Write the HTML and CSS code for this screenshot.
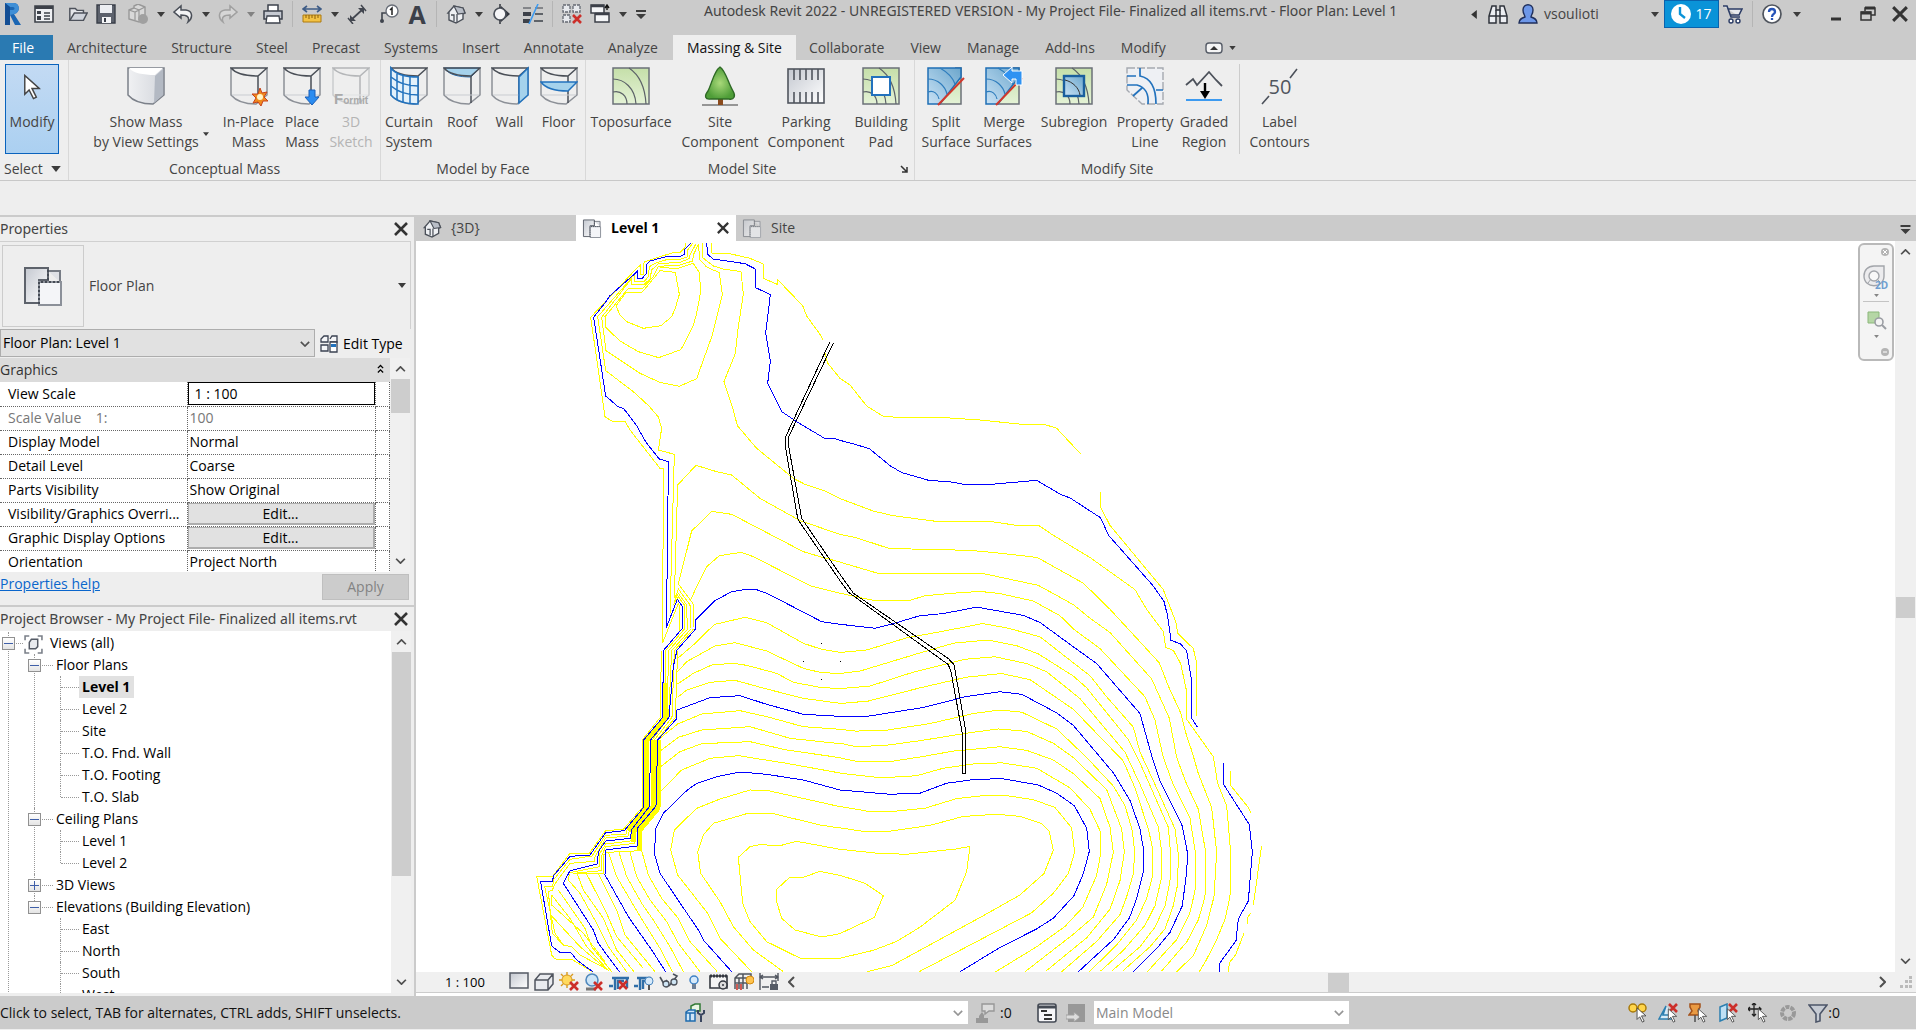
FILE: index.html
```html
<!DOCTYPE html>
<html lang="en">
<head>
  <meta charset="UTF-8" />
  <meta name="viewport" content="width=device-width, initial-scale=1.0" />
  <title>Autodesk Revit 2022</title>
  <link rel="stylesheet" href="styles.css">
</head>
<body>
<svg class="defs" aria-hidden="true">
  <defs>
    <linearGradient id="grey" x1="0" y1="0" x2="1" y2="1"><stop offset="0" stop-color="#c4c8d0"/><stop offset="1" stop-color="#fff"/></linearGradient>
    <linearGradient id="green" x1="0" y1="0" x2="0" y2="1"><stop offset="0" stop-color="#c5dfa9"/><stop offset="1" stop-color="#e4f2d6"/></linearGradient>
    <linearGradient id="sea" x1="1" y1="0" x2="0" y2="1"><stop offset="0" stop-color="#6ba6cc"/><stop offset="1" stop-color="#c9e2f5"/></linearGradient>
    <linearGradient id="solid" x1="0" y1="0" x2="1" y2="0"><stop offset="0" stop-color="#f0f1f3"/><stop offset="1" stop-color="#d3d6dc"/></linearGradient>
    <radialGradient id="leaf"><stop offset="0" stop-color="#a9d97a"/><stop offset="1" stop-color="#4f9e38"/></radialGradient>
    <symbol id="mass" viewBox="0 0 38 40">
      <path d="M1 2V29C6 35 14 38 26 38L37 29V2" fill="none" stroke="#8c9097" stroke-width="1.5"/>
      <path d="M1 2H37L28 10C16 10 6 8 1 2ZM28 10V37" fill="none" stroke="#4a4f57" stroke-width="1.5"/>
      <path d="M2 29H27L36 29" stroke="#c9ccd1" fill="none"/>
    </symbol>
    <symbol id="topo" viewBox="0 0 38 40">
      <rect x="1" y="2" width="36" height="36" fill="url(#green)" stroke="#6b7078" stroke-width="1.5"/>
      <path d="M17 2C26 8 33 20 34 38M1 13C12 13 23 22 24 38M1 26C9 24 15 30 15 38" fill="none" stroke="#5c6268" stroke-width="1.2"/>
    </symbol>
    <symbol id="topo-blue" viewBox="0 0 38 40">
      <path d="M28 2H34V38H12" fill="url(#green)" stroke="#6b7078" stroke-width="1.5"/>
      <path d="M1 2H34V11L13 38H1Z" fill="url(#sea)" stroke="#1f6fb5" stroke-width="1.5"/>
      <path d="M13 2C20 6 26 12 28 18M1 13C11 13 18 20 20 28M1 26C7 24 11 28 12 33" fill="none" stroke="#2f7dbd" stroke-width="1.2"/>
      <path d="M11 39L37 12" stroke="#d2382c" stroke-width="2"/>
    </symbol>
    <symbol id="plan" viewBox="0 0 40 40">
      <path d="M2 2H25V14H16V37H2Z" fill="url(#grey)" stroke="#5d626b" stroke-width="2"/>
      <path d="M25 5H37V16" fill="#dfe1e6" stroke="#777c85" stroke-width="2"/>
      <path d="M16 16H38V39H16Z" fill="#f4f5f8" stroke="#8b9099" stroke-width="2"/>
      <path d="M16 38V16H38M25 14V3" fill="none" stroke="#444a54" stroke-width="2" stroke-dasharray="2 2"/>
    </symbol>
    <symbol id="x" viewBox="0 0 14 14"><path d="M1 1L13 13M13 1L1 13" stroke="#333" stroke-width="2.6"/></symbol>
    <symbol id="redx" viewBox="0 0 10 10"><path d="M1 1L9 9M9 1L1 9" stroke="#cc2f2a" stroke-width="2.6"/></symbol>
    <symbol id="down" viewBox="0 0 8 5"><path d="M0 0H8L4 5Z" fill="#3c3c3c"/></symbol>
    <symbol id="chev" viewBox="0 0 12 8"><path d="M1 6L6 1L11 6" fill="none" stroke="#505050" stroke-width="2"/></symbol>
    <symbol id="arrow" viewBox="0 0 12 18"><path d="M1 1V14L4 11L7 17L9 16L6 10L11 10Z" fill="#fff" stroke="#444" stroke-width="1"/></symbol>
    <symbol id="cube" viewBox="0 0 20 20">
      <path d="M2 8L8 2L18 5V14L10 19L2 16Z" fill="#f1f2f4" stroke="#555b64" stroke-width="1.4"/>
      <path d="M2 8L10 10L18 5M10 10V19" fill="none" stroke="#555b64" stroke-width="1.2"/>
    </symbol>
    <symbol id="house" viewBox="0 0 20 20">
      <path d="M2 9L8 2L17 4L19 9L17 10V15L10 19L3 16V9Z" fill="#eef0f3" stroke="#4c515a" stroke-width="1.4"/>
      <path d="M8 2L12 10L19 9L17 4Z" fill="#b9bec7" stroke="#4c515a" stroke-width="1.2"/>
      <path d="M11 10V19M5 11H8V17" fill="none" stroke="#4c515a" stroke-width="1.3"/>
    </symbol>
  </defs>
</svg>

<header class="titlebar">
  <div class="quick">
    <button class="ico" aria-label="Revit"><svg viewBox="0 0 20 26"><path d="M3 2H12C18 2 19 12 12 13L19 24H13L8 14V24H3Z" fill="#1b66b3"/><path d="M3 2H12C18 2 19 12 12 13L8 14V9H11C13 9 13 6 11 6H8L3 2Z" fill="#3f8fd6"/><path d="M3 2L8 6V24H3Z" fill="#134e94"/></svg></button>
    <button class="ico gap" aria-label="Home"><svg viewBox="0 0 20 20"><path d="M1 2H19V18H1Z" fill="#eef0f3" stroke="#3d4149" stroke-width="1.6"/><path d="M1 2H19V5H1ZM3 7H7V10H3ZM3 12H7V16H3Z" fill="#3d4149"/><path d="M10 9H16M10 12H16M10 15H16" stroke="#3d4149" stroke-width="1.4"/></svg></button>
    <button class="ico gap open" aria-label="Open"><svg viewBox="0 0 22 20"><path d="M2 17V4H8L10 6H17V9" fill="#e4e6ea" stroke="#4d525b" stroke-width="1.6"/><path d="M2 17L7 9H21L17 17Z" fill="#cfd3da" stroke="#4d525b" stroke-width="1.6"/></svg></button>
    <button class="ico" aria-label="Save"><svg viewBox="0 0 20 20"><path d="M1 1H19V19H1Z" fill="#5d626d" stroke="#3a3f49" stroke-width="1.4"/><path d="M4 1H16V9H4Z" fill="#eceef2"/><path d="M6 13H15V19H6Z" fill="#f4f5f7"/><path d="M8 14H10V18H8Z" fill="#3a3f49"/></svg></button>
    <button class="ico gap dim" aria-label="Synchronize"><svg viewBox="0 0 20 20"><path d="M1 6L6 4V2L10 0L17 3V12L11 18L1 15Z" fill="#e6e6e6" stroke="#666" stroke-width="1.4"/><path d="M1 6L7 8L17 3M7 8V16M6 4L11 6V16" fill="none" stroke="#666" stroke-width="1.2"/><circle cx="15" cy="15" r="5" fill="#777"/></svg></button>
    <button class="dd" aria-label="More"><svg><use href="#down"/></svg></button>
    <button class="ico" aria-label="Undo"><svg viewBox="0 0 20 20"><path d="M1 8L8 2V6H13C20 7 20 14 15 18C17 13 14 11 8 11V14Z" fill="#f2f3f5" stroke="#4a4f58" stroke-width="1.5"/></svg></button>
    <button class="dd" aria-label="Undo list"><svg><use href="#down"/></svg></button>
    <button class="ico dim" aria-label="Redo"><svg viewBox="0 0 20 20"><path d="M19 8L12 2V6H7C0 7 0 14 5 18C3 13 6 11 12 11V14Z" fill="#e2e2e2" stroke="#777" stroke-width="1.5"/></svg></button>
    <button class="dd dim" aria-label="Redo list"><svg><use href="#down"/></svg></button>
    <button class="ico" aria-label="Print"><svg viewBox="0 0 20 20"><path d="M5 8V1H15V8" fill="#fff" stroke="#3d424c" stroke-width="1.5"/><path d="M1 7H19V15H1Z" fill="#c5c9d1" stroke="#3d424c" stroke-width="1.5"/><path d="M4 12H16L17 19H3Z" fill="#fff" stroke="#3d424c" stroke-width="1.3"/></svg></button>
    <span class="vr"></span>
    <button class="ico" aria-label="Measure"><svg viewBox="0 0 20 20"><path d="M1 5H19M5 2L1 5L5 8M15 2L19 5L15 8" fill="none" stroke="#3e5c86" stroke-width="1.6"/><path d="M1 11H19V18H1Z" fill="#f3c244" stroke="#ad7a10"/><path d="M4 11V14M7 11V15M10 11V14M13 11V15M16 11V14" stroke="#8a5e08"/></svg></button>
    <button class="dd" aria-label="Measure list"><svg><use href="#down"/></svg></button>
    <button class="ico" aria-label="Aligned dimension"><svg viewBox="0 0 20 20"><path d="M4 16L16 5" stroke="#42464f" stroke-width="1.7"/><path d="M3 17V11L9 17ZM17 4V10L11 4Z" fill="#42464f"/><path d="M1 14L6 20M14 1L19 7" stroke="#42464f" stroke-width="1.5"/></svg></button>
    <button class="ico gap" aria-label="Tag"><svg viewBox="0 0 20 20"><path d="M3 18V9H7" fill="none" stroke="#3f444d" stroke-width="1.6"/><circle cx="3" cy="17" r="2" fill="#3f444d"/><circle cx="13" cy="7" r="6" fill="#fff" stroke="#6a6f79" stroke-width="1.4"/><path d="M11 6L13 4V11" fill="none" stroke="#222" stroke-width="1.5"/></svg></button>
    <button class="ico text" aria-label="Text">A</button>
    <span class="vr"></span>
    <button class="ico" aria-label="3D view"><svg><use href="#house"/></svg></button>
    <button class="dd" aria-label="3D list"><svg><use href="#down"/></svg></button>
    <button class="ico" aria-label="Section"><svg viewBox="0 0 20 20"><path d="M10 2L19 10L10 18Z" fill="#32363e"/><circle cx="9" cy="10" r="6" fill="#f5f5f7" stroke="#4c515a" stroke-width="1.7"/><path d="M9 0V4M9 16V20" stroke="#32363e" stroke-width="1.5"/></svg></button>
    <button class="ico gap" aria-label="Thin lines"><svg viewBox="0 0 20 20"><path d="M0 4H8M12 4H20" stroke="#3d4149"/><path d="M0 10H8M0 17H7" stroke="#3d4149" stroke-width="4"/><path d="M12 10H20M11 17H20" stroke="#3d4149" stroke-width="1.4"/><path d="M15 0L6 20" stroke="#3c9af0" stroke-width="1.6"/></svg></button>
    <span class="vr"></span>
    <button class="ico" aria-label="Close inactive"><svg viewBox="0 0 20 20"><path d="M1 1H8V8H1ZM11 1H18V8H11ZM1 11H8V18H1Z" fill="#e7e9ed" stroke="#656a73" stroke-width="1.3" stroke-dasharray="3 1"/><use href="#redx" x="10" y="10" width="10" height="10"/></svg></button>
    <button class="ico" aria-label="Switch windows"><svg viewBox="0 0 20 20"><path d="M1 1H14V9H1ZM5 9H19V18H5Z" fill="#f4f5f7" stroke="#3c4049" stroke-width="1.5"/><path d="M1 2H14M5 10H19" stroke="#3c4049" stroke-width="2.4"/><path d="M17 6V2M15 4L17 1L19 4" fill="none" stroke="#111" stroke-width="1.4"/></svg></button>
    <button class="dd" aria-label="Windows list"><svg><use href="#down"/></svg></button>
    <button class="dd" aria-label="Customize"><svg viewBox="0 0 10 9"><path d="M0 0H10V2H0ZM0 4H10L5 9Z" fill="#3c3c3c"/></svg></button>
  </div>
  <h1>Autodesk Revit 2022 - UNREGISTERED VERSION - My Project File- Finalized all items.rvt - Floor Plan: Level 1</h1>
  <div class="account">
    <button class="dd" aria-label="Collapse search"><svg viewBox="0 0 5 8"><path d="M5 0V8L0 4Z" fill="#333"/></svg></button>
    <button class="ico" aria-label="Search"><svg viewBox="0 0 20 20"><path d="M4 2H8V6H12V2H16L19 12V19H12V12H8V19H1V12Z" fill="#eceef2" stroke="#2f333b" stroke-width="1.5"/><path d="M1 12H8M12 12H19M8 6V12M12 6V12" stroke="#2f333b" stroke-width="1.5"/></svg></button>
    <button class="user"><svg viewBox="0 0 20 20"><path d="M5 6C5 -1 15 -1 15 6C15 10 13 11 13 13C16 14 19 15 19 19H1C1 15 4 14 7 13C7 11 5 10 5 6Z" fill="#6d97e8" stroke="#1f2f5c" stroke-width="1.4"/></svg>vsoulioti</button>
    <button class="dd" aria-label="Account list"><svg><use href="#down"/></svg></button>
    <button class="trial"><svg viewBox="0 0 20 20"><circle cx="10" cy="10" r="10" fill="#fff"/><path d="M9 3V10L14 14" fill="none" stroke="#0a93d8" stroke-width="2.4"/></svg>17</button>
    <button class="ico" aria-label="Store"><svg viewBox="0 0 20 20"><path d="M0 2H4L8 13H17M5 5H19L16 11H7" fill="#e8eaef" stroke="#2c3d66" stroke-width="1.6"/><circle cx="8" cy="17" r="2" fill="#fff" stroke="#2c3d66" stroke-width="1.4"/><circle cx="15" cy="17" r="2" fill="#fff" stroke="#2c3d66" stroke-width="1.4"/></svg></button>
    <span class="vr"></span>
    <button class="ico" aria-label="Help"><svg viewBox="0 0 20 20"><circle cx="10" cy="10" r="9" fill="#fff" stroke="#50555e" stroke-width="1.7"/><path d="M7 8C7 4 13 4 13 8C13 10 10 10 10 13M10 14V16" fill="none" stroke="#2553b8" stroke-width="2.3"/></svg></button>
    <button class="dd" aria-label="Help list"><svg><use href="#down"/></svg></button>
  </div>
  <div class="window">
    <button aria-label="Minimize"><svg viewBox="0 0 16 16"><path d="M3 13H13" stroke="#333" stroke-width="3"/></svg></button>
    <button aria-label="Restore"><svg viewBox="0 0 16 16"><path d="M5 5V2H15V9H11M1 6H11V14H1Z" fill="none" stroke="#333" stroke-width="1.5"/><path d="M5 2H15M1 7H11" stroke="#333" stroke-width="3"/></svg></button>
    <button aria-label="Close"><svg><use href="#x"/></svg></button>
  </div>
</header>

<nav class="tabs">
  <a class="file" href="#">File</a>
  <a href="#">Architecture</a>
  <a href="#">Structure</a>
  <a href="#">Steel</a>
  <a href="#">Precast</a>
  <a href="#">Systems</a>
  <a href="#">Insert</a>
  <a href="#">Annotate</a>
  <a href="#">Analyze</a>
  <a class="active" href="#">Massing &amp; Site</a>
  <a href="#">Collaborate</a>
  <a href="#">View</a>
  <a href="#">Manage</a>
  <a href="#">Add-Ins</a>
  <a href="#">Modify</a>
  <button class="minimize" aria-label="Minimize ribbon"><svg viewBox="0 0 18 12"><rect x="1" y="1" width="16" height="10" rx="3" fill="#f4f4f4" stroke="#555b66" stroke-width="1.4"/><path d="M5 8L9 4L13 8Z" fill="#333"/></svg><svg class="tri"><use href="#down"/></svg></button>
</nav>

<div class="ribbon">
  <section class="panel select">
    <div class="tools"><button class="modify"><svg viewBox="0 0 12 18"><use href="#arrow"/></svg>Modify</button></div>
    <h2>Select <svg><use href="#down"/></svg></h2>
  </section>
  <section class="panel mass">
    <div class="tools">
      <button><svg viewBox="0 0 38 40"><path d="M1 2H37V29L26 38C14 38 6 35 1 29Z" fill="url(#solid)" stroke="#7b8089" stroke-width="1.5"/><path d="M2 2H36L28 9C16 9 6 7 2 2Z" fill="#fff"/><path d="M28 10L36 3V29L27 37Z" fill="#b3b9c3"/></svg><span>Show Mass<br>by View Settings</span><svg class="tri"><use href="#down"/></svg></button>
      <button><svg viewBox="0 0 38 40"><use href="#mass"/><path d="M30 22L32 27L37 26L34 31L38 35L33 35L31 40L28 36L23 37L26 32L22 28L28 28Z" fill="#f08a1d" stroke="#c9421a"/><circle cx="30" cy="31" r="3" fill="#fff6c9"/></svg><span>In-Place<br>Mass</span></button>
      <button><svg viewBox="0 0 38 40"><use href="#mass"/><path d="M26 24H32V31H36L29 39L22 31H26Z" fill="#2b8cf0" stroke="#1b5fb8"/></svg><span>Place<br>Mass</span></button>
      <button disabled><svg viewBox="0 0 38 40"><use href="#mass" opacity=".35"/><text x="2" y="38" class="formit"><tspan class="big">F</tspan>ormit</text></svg><span>3D<br>Sketch</span></button>
    </div>
    <h2>Conceptual Mass</h2>
  </section>
  <section class="panel face">
    <div class="tools">
      <button><svg viewBox="0 0 38 40"><use href="#mass"/><path d="M1 2C6 9 16 11 28 11V38C16 38 6 35 1 29Z" fill="#e3f1fb" stroke="#2272bd" stroke-width="1.6"/><path d="M7 8V34M13 10V37M20 11V38M1 11C8 17 18 20 28 20M1 20C8 26 18 29 28 29" fill="none" stroke="#2272bd" stroke-width="1.5"/></svg><span>Curtain<br>System</span></button>
      <button><svg viewBox="0 0 38 40"><path d="M1 2H37L28 11C16 11 6 9 1 2Z" fill="#a5d2ec" stroke="#2272bd"/><use href="#mass"/></svg><span>Roof</span></button>
      <button><svg viewBox="0 0 38 40"><use href="#mass"/><path d="M28 11L37 2V29L28 37Z" fill="#a5d2ec" stroke="#2272bd" stroke-width="1.5"/></svg><span>Wall</span></button>
      <button><svg viewBox="0 0 38 40"><use href="#mass"/><path d="M1 16H37L28 25C16 25 6 23 1 16Z" fill="#a5d2ec" stroke="#2272bd" stroke-width="1.5"/></svg><span>Floor</span></button>
    </div>
    <h2>Model by Face</h2>
  </section>
  <section class="panel site">
    <div class="tools">
      <button><svg><use href="#topo"/></svg><span>Toposurface</span></button>
      <button><svg viewBox="0 0 38 40"><path d="M1 39H37" stroke="#777" stroke-width="1.6"/><path d="M17 32H22V39H17Z" fill="#8a4a1c"/><path d="M19 1C25 5 27 17 32 25C35 30 33 34 28 33H10C4 34 3 30 7 25C11 17 13 5 19 1Z" fill="url(#leaf)" stroke="#2f6a26" stroke-width="1.4"/></svg><span>Site<br>Component</span></button>
      <button><svg viewBox="0 0 38 40"><rect x="1" y="3" width="36" height="34" fill="url(#grey)" stroke="#50555e" stroke-width="1.6"/><path d="M7 3V14M13 3V14M19 3V14M25 3V14M31 3V14M7 26V37M13 26V37M19 26V37M25 26V37M31 26V37" stroke="#50555e" stroke-width="1.6"/></svg><span>Parking<br>Component</span></button>
      <button><svg viewBox="0 0 38 40"><use href="#topo"/><rect x="10" y="11" width="18" height="18" fill="#fff" stroke="#2272bd" stroke-width="2"/></svg><span>Building<br>Pad</span></button>
    </div>
    <h2>Model Site<svg class="launch" viewBox="0 0 8 8"><path d="M1 1L7 7M7 2V7H2" fill="none" stroke="#333" stroke-width="1.5"/></svg></h2>
  </section>
  <section class="panel edit">
    <div class="tools">
      <button><svg><use href="#topo-blue"/></svg><span>Split<br>Surface</span></button>
      <button><svg viewBox="0 0 38 40"><use href="#topo-blue"/><path d="M18 9L27 1V5H37V19H31V13H27V17Z" fill="#2f92f2" stroke="#fff"/></svg><span>Merge<br>Surfaces</span></button>
      <button><svg viewBox="0 0 38 40"><use href="#topo"/><rect x="9" y="10" width="20" height="20" fill="url(#sea)" stroke="#1a5f9e" stroke-width="2.4"/><path d="M10 14C18 16 24 22 25 29" fill="none" stroke="#333"/></svg><span>Subregion</span></button>
      <button><svg viewBox="0 0 38 40"><path d="M1 2H37V38H16L1 24Z" fill="#eef0f4" stroke="#a5a9b0" stroke-width="1.4" stroke-dasharray="8 2"/><path d="M14 2V10C24 12 30 20 30 38M30 24H37M1 10H10M1 19H11C19 21 23 28 22 38M16 22L7 30" fill="none" stroke="#2272bd" stroke-width="1.7"/></svg><span>Property<br>Line</span></button>
      <button><svg viewBox="0 0 38 40"><path d="M1 19L8 13L12 19L24 6L31 14L37 20" fill="none" stroke="#4c515a" stroke-width="1.8"/><path d="M20 17V28" stroke="#000" stroke-width="2.4"/><path d="M15 25H25L20 33Z"/><path d="M1 34H37" stroke="#3c9af0" stroke-width="2"/></svg><span>Graded<br>Region</span></button>
      <button class="apart"><svg viewBox="0 0 38 40"><path d="M1 38L8 30M29 12L36 3" stroke="#4c515a" stroke-width="1.6"/><text x="19" y="28" class="fifty">50</text></svg><span>Label<br>Contours</span></button>
    </div>
    <h2>Modify Site</h2>
  </section>
</div>
<div class="options"></div>

<main>
  <aside>
    <section class="props">
      <header class="bar"><h3>Properties</h3><button aria-label="Close properties"><svg><use href="#x"/></svg></button></header>
      <button class="type">
        <span class="thumb"><svg><use href="#plan"/></svg></span>
        <span>Floor Plan</span>
        <svg class="tri"><use href="#down"/></svg>
      </button>
      <div class="instance">
        <div class="combo"><select aria-label="Instance"><option>Floor Plan: Level 1</option></select><svg><use href="#chev"/></svg></div>
        <button class="edit-type"><svg viewBox="0 0 18 18"><path d="M1 4L4 1H8V7H1ZM10 4L12 1H17V7H10M1 10H8V16H1Z" fill="#f5f6f8" stroke="#3a4151" stroke-width="1.3"/><path d="M10 7H17V17H10Z" fill="#fff" stroke="#3a4151" stroke-width="1.3"/><path d="M11 9H16V12H11Z" fill="#2272bd"/></svg>Edit Type</button>
      </div>
      <div class="grid">
        <table>
          <colgroup><col class="name"><col class="value"><col></colgroup>
          <tbody>
          <tr><th class="group" colspan="3">Graphics<svg viewBox="0 0 8 10"><path d="M1 4L4 1L7 4M1 9L4 6L7 9" fill="none" stroke="#000" stroke-width="1.5"/></svg></th></tr>
          <tr><th><label for="scale">View Scale</label></th><td class="edit"><input id="scale" value="1 : 100"></td><td></td></tr>
          <tr class="off"><th>Scale Value &nbsp; &nbsp;1:</th><td>100</td><td></td></tr>
          <tr><th>Display Model</th><td>Normal</td><td></td></tr>
          <tr><th>Detail Level</th><td>Coarse</td><td></td></tr>
          <tr><th>Parts Visibility</th><td>Show Original</td><td></td></tr>
          <tr><th>Visibility/Graphics Overri...</th><td class="edit"><button>Edit...</button></td><td></td></tr>
          <tr><th>Graphic Display Options</th><td class="edit"><button>Edit...</button></td><td></td></tr>
          <tr><th>Orientation</th><td>Project North</td><td></td></tr>
          </tbody>
        </table>
        <div class="scroll"><svg><use href="#chev"/></svg><i></i><svg class="flip"><use href="#chev"/></svg></div>
      </div>
      <footer><a href="#">Properties help</a><button disabled>Apply</button></footer>
    </section>

    <section class="browser">
      <header class="bar"><h3>Project Browser - My Project File- Finalized all items.rvt</h3><button aria-label="Close browser"><svg><use href="#x"/></svg></button></header>
      <div class="treebox">
        <ul class="tree">
          <li><button class="minus" aria-label="Collapse"></button><svg class="views" viewBox="0 0 18 18"><path d="M1 5V1H5M13 1H17V5M17 13V17H13M5 17H1V13" fill="none" stroke="#7b8089" stroke-width="1.5"/><path d="M5 7L7 4H13V11L11 13H5Z" fill="#e8eaee" stroke="#555b66" stroke-width="1.4"/></svg>Views (all)
            <ul>
              <li><button class="minus" aria-label="Collapse"></button>Floor Plans
                <ul>
                  <li><b>Level 1</b></li>
                  <li>Level 2</li>
                  <li>Site</li>
                  <li>T.O. Fnd. Wall</li>
                  <li>T.O. Footing</li>
                  <li>T.O. Slab</li>
                </ul>
              </li>
              <li><button class="minus" aria-label="Collapse"></button>Ceiling Plans
                <ul>
                  <li>Level 1</li>
                  <li>Level 2</li>
                </ul>
              </li>
              <li><button class="minus plus" aria-label="Expand"></button>3D Views</li>
              <li><button class="minus" aria-label="Collapse"></button>Elevations (Building Elevation)
                <ul>
                  <li>East</li>
                  <li>North</li>
                  <li>South</li>
                  <li>West</li>
                </ul>
              </li>
            </ul>
          </li>
        </ul>
        <div class="scroll tall"><svg><use href="#chev"/></svg><i></i><svg class="flip"><use href="#chev"/></svg></div>
      </div>
    </section>
  </aside>

  <section class="work">
    <nav class="views-tabs">
      <a href="#"><svg><use href="#house"/></svg>{3D}</a>
      <a class="active" href="#"><svg><use href="#plan"/></svg>Level 1<svg class="close"><use href="#x"/></svg></a>
      <a href="#"><svg class="faded"><use href="#plan"/></svg>Site</a>
      <button aria-label="Tab list"><svg viewBox="0 0 10 9"><path d="M0 0H10V2H0ZM0 4H10L5 9Z" fill="#3c3c3c"/></svg></button>
    </nav>
    <div class="canvas">
      <svg class="drawing">
        <g transform="translate(104 -6) scale(.33333)">
          <!-- north part -->
          <g class="minor">
            <polyline points="497,25 495,37 480,52 460,53 430,62 375,80 370,88 370,118 362,118 362,90 350,100 212,247 255,545 275,558 315,559 330,585 420,700 430,700 428,1223 475,1105 480,1115 480,1190"/>
            <polyline points="518,25 503,45 503,65 478,74 440,74 405,85 388,95 385,125 372,140 345,140 343,118 325,140 233,245 257,407 290,432 340,470 388,514 415,546 425,580 415,645 463,658 450,1135"/>
            <polyline points="527,28 510,60 510,70 480,82 415,86 395,105 390,132 370,150 335,150 335,130 245,247 258,347 360,415 420,442 478,454 530,431 577,300 607,178 598,113 560,96 540,75 535,28"/>
            <polyline points="535,28 520,60 518,78 480,90 415,94 400,125 368,160 325,160 255,245 257,277 300,318 355,350 416,368 480,345 490,332 520,270 530,235 542,170 538,113 520,85 475,100 420,98"/>
            <polyline points="318,172 367,171 420,107 466,112 478,178 465,222 455,245 423,272 370,280 320,260 300,240 288,213 318,172"/>
            <polyline points="548,25 548,68 580,93 610,102 663,110 670,178 655,275 646,355 612,440 640,525 652,572 710,640 820,730 855,748 920,770 960,791"/>
            <polyline points="575,25 575,54 625,55 690,70 730,87 730,130 772,148 772,133 848,212 860,243 905,305 908,315"/>
            <polyline points="915,355 922,383 960,430 990,450 1040,513 1090,544 1135,547 1260,547 1380,555"/>
            <polyline points="463,1090 473,750 528,691 590,710 635,720 720,790 840,857 960,898"/>
            <polyline points="522,1175 522,1110 475,1047 515,888 575,829 635,838 850,950 900,965 960,981"/>
            <polyline points="512,1095 530,1055 560,995 598,962 663,952 700,965 870,1052 960,1075"/>
            <polyline points="465,1090 475,1062 510,1110 512,1180"/>
            <polyline points="463,1100 475,1075 500,1110 502,1185"/>
            <polyline points="460,1110 475,1085 493,1110 495,1185"/>
          </g>
          <g class="major">
            <polyline points="512,25 493,45 493,58 480,64 438,65 390,78 379,90 379,115 367,130 353,130 353,107 340,120 270,182 260,197 221,247 257,483 293,514 312,522 350,572 378,622 418,672 445,680 443,895 439,1178 472,1093 487,1114 487,1180"/>
            <polyline points="560,25 563,58 580,72 675,86 706,102 707,158 751,179 737,295 751,378 743,445 785,530 830,560 912,609 940,610 960,616"/>
            <polyline points="526,1183 526,1155 585,1097 635,1070 680,1063 710,1064 745,1077 905,1160 960,1168"/>
          </g>
          <!-- south west part -->
          <g transform="translate(0 1095)">
            <g class="minor band">
              <polyline points="436,250 436,352 381,420 381,622 324,692"/>
              <polyline points="402,420 400,620 342,690 342,725"/>
              <polyline points="416,420 414,625 360,690 358,750"/>
            </g>
            <g class="minor">
              <polyline points="424,152 421,352 367,420 367,622 310,688 257,692 208,760 150,760 98,829 50,829 95,1065 105,1077 155,1078 200,1105 215,1115"/>
              <polyline points="495,85 437,152 435,352 380,420 378,622 320,692 318,702 257,706 216,768 150,778 102,838 98,858 74,860 105,1000 130,1035"/>
              <polyline points="502,88 446,152 441,352 386,420 384,622 328,692 325,708 257,714 224,772 224,784 150,790 106,850 96,872 85,874 97,1000"/>
              <polyline points="512,88 455,152 446,352 397,420 394,622 340,700 340,722 257,732 240,760 240,800 150,818"/>
              <polyline points="520,88 463,152 456,352 403,420 400,622 345,700 345,730 257,740 246,765 244,812 160,820"/>
              <polyline points="473,152 466,352 411,420 412,622 364,690 364,752 262,757 250,765 250,820 170,822"/>
              <polyline points="473,175 520,135 555,100 585,73 675,52 740,68 850,130 905,148 960,157"/>
              <polyline points="473,215 500,185 585,138 645,128 740,153 850,205 900,217 960,221"/>
              <polyline points="473,252 520,220 575,195 640,190 680,196 770,220 820,247 900,262 960,266"/>
              <polyline points="473,292 500,270 570,247 645,241 740,267 850,295 960,310"/>
              <polyline points="960,388 850,380 740,350 660,332 545,342 473,372 420,415"/>
              <polyline points="960,431 810,415 690,380 545,390 475,412 418,455"/>
              <polyline points="960,473 800,450 690,425 545,431 480,455 418,503"/>
              <polyline points="960,519 800,490 655,467 570,475 485,510 418,578"/>
              <polyline points="960,620 740,571 690,570 600,597 530,625 463,690 452,750 473,825 563,940 600,1015 695,1115"/>
              <polyline points="960,684 900,675 765,642 680,641 580,670 550,705 533,755 542,820 600,905 640,980 700,1050 790,1115"/>
              <polyline points="960,748 830,724 780,737 720,734 690,740 655,772 668,910 690,965 740,1025 845,1077 960,1075"/>
              <polyline points="960,826 900,814 850,832 808,833 770,868 770,905 785,955 825,990 905,1011 960,1001"/>
              <polyline points="365,752 385,825 425,895 475,955 510,1025 592,1115"/>
              <polyline points="330,757 350,830 390,900 440,965 475,1030 540,1115"/>
              <polyline points="297,757 320,830 365,910 400,960 450,1040 490,1115"/>
              <polyline points="265,757 290,830 340,915 370,965 420,1045 457,1115"/>
              <polyline points="235,822 290,930 315,1005 360,1060 405,1115"/>
              <polyline points="200,822 260,940 290,1010 370,1105"/>
              <polyline points="172,822 190,870 250,955 290,1050 342,1115"/>
              <polyline points="148,822 145,840 180,880 230,970 265,1040 320,1115"/>
              <polyline points="115,870 195,985 215,1040 275,1115"/>
              <polyline points="95,885 150,955 200,1040 268,1115"/>
              <polyline points="95,885 95,915 190,1000 255,1085"/>
              <polyline points="97,950 180,1040 262,1110"/>
              <polyline points="97,1000 130,1035 155,1040 180,1065 265,1110"/>
            </g>
            <g class="major">
              <polyline points="487,85 430,152 428,352 371,420 371,622 313,692 257,698 210,765 150,769 100,828 98,844 62,846 95,1038 120,1057 152,1057 170,1080 218,1115"/>
              <polyline points="526,88 471,150 460,200 447,352 392,420 388,620 334,690 332,715 257,723 235,755 232,792 150,812 130,850 220,990 235,1030 298,1115"/>
              <polyline points="960,349 940,348 850,343 740,313 660,287 570,293 471,330 471,355 413,420 408,618 352,685 352,738 257,750 255,825 325,950 395,1050 437,1115"/>
              <polyline points="960,570 850,540 740,523 660,516 590,530 530,550 500,572 430,640 408,685 403,760 420,820 535,990 550,1020 635,1115"/>
            </g>
            <path class="dot" d="M903 129h3v3h-3zM849 183h3v3h-3zM960 183h3v3h-3zM903 237h3v3h-3z"/>
          </g>
          <!-- east part -->
          <g transform="translate(960 555) scale(1 1.0714)">
            <g class="minor">
              <polyline points="420,0 545,12 615,13 650,23 722,95"/>
              <polyline points="781,202 781,243 810,295 970,475 1008,567 1013,597 1060,640 1070,680 1070,830"/>
              <polyline points="0,220 100,255 160,268 290,284 450,284 530,295 597,296 640,323 750,385 885,475 920,530 970,592 977,637 1000,645 1022,682 1040,760 1040,838 1120,943 1133,1018 1160,1080 1172,1210 1170,1335 1155,1398 1130,1455 1100,1510 1078,1545"/>
              <polyline points="0,320 50,330 145,359 200,361 320,363 415,367 500,375 592,385 730,457 810,530 958,680 985,745 1022,820 1040,885 1055,925 1075,990 1115,1085 1130,1210 1122,1335 1100,1415 1060,1500 1010,1545"/>
              <polyline points="0,398 120,431 430,430 595,463 700,517 750,555 810,595 935,725 988,835 1010,945 1040,1020 1075,1090 1097,1210 1095,1335 1075,1400 1040,1462 965,1543"/>
              <polyline points="0,485 100,505 210,505 255,492 340,485 420,480 480,486 580,507 660,548 700,585 780,640 915,775 945,840 970,945 1000,1022 1050,1115 1067,1215 1065,1320 1048,1385 1010,1455 922,1545"/>
              <polyline points="0,651 80,644 200,610 300,593 428,570 500,582 600,607 700,680 750,716 800,775 880,860 900,930 940,1010 1005,1145 1015,1215 1013,1300 1000,1360 975,1425 930,1475 848,1543"/>
              <polyline points="0,710 60,703 230,655 340,625 445,616 530,632 595,655 700,717 740,750 865,895 900,960 985,1140 992,1215 990,1290 975,1360 945,1420 900,1475 815,1543"/>
              <polyline points="0,752 90,745 220,706 375,670 465,663 560,682 620,705 720,780 855,930 900,1020 955,1140 965,1210 965,1280 945,1360 915,1415 850,1485 782,1543"/>
              <polyline points="0,794 85,787 240,750 380,720 485,710 570,727 700,810 850,955 885,1030 925,1145 938,1200 938,1275 920,1340 890,1400 830,1470 748,1545"/>
              <polyline points="0,866 45,871 130,870 270,850 400,822 480,812 545,818 650,865 740,945 820,1025 855,1080 877,1150 884,1210 880,1270 860,1335 840,1385 770,1460 665,1545"/>
              <polyline points="0,905 45,914 130,912 240,898 380,877 475,865 560,872 640,905 700,945 800,1035 845,1145 853,1210 840,1290 810,1370 740,1450 618,1543"/>
              <polyline points="0,946 45,955 160,955 245,943 340,927 480,915 560,925 640,952 700,990 780,1060 810,1140 820,1210 800,1300 760,1392 700,1440 555,1545"/>
              <polyline points="0,989 125,1002 230,996 310,975 400,963 485,960 590,975 690,1030 750,1090 780,1150 783,1210 770,1275 728,1365 675,1418 590,1475 467,1545"/>
              <polyline points="0,1082 80,1095 160,1096 255,1087 350,1060 430,1052 500,1052 580,1063 645,1085 695,1142 704,1210 685,1270 640,1325 575,1380 237,1545"/>
              <polyline points="0,1142 70,1152 145,1152 270,1135 370,1110 470,1104 540,1110 605,1130 627,1150 640,1205 612,1270 540,1330 430,1388 155,1528 80,1545"/>
              <polyline points="0,1202 110,1213 200,1216 350,1201 390,1194 380,1265 345,1345 240,1420 170,1460 100,1485 0,1507"/>
              <polyline points="0,1275 75,1297 130,1332 103,1393 0,1438"/>
              <polyline points="1171,983 1171,1022 1225,1085 1232,1100"/>
              <polyline points="1265,1192 1240,1357"/>
              <polyline points="1232,1380 1222,1395 1222,1410"/>
              <polyline points="1213,1435 1187,1497 1168,1520 1165,1545"/>
            </g>
            <g class="major">
              <polyline points="0,57 40,67 88,80 150,128 185,147 270,170 325,172 370,180 455,180 590,169 665,210 690,218 782,274 805,322 940,465 972,508 982,545 993,617 1022,627 1040,647 1054,725 1055,835 1072,860"/>
              <polyline points="0,572 105,583 160,570 240,548 310,542 410,524 550,547 600,567 700,635 770,682 900,822 935,940 960,1010 1027,1137 1043,1215 1040,1265 1027,1360 990,1435 950,1480 880,1545"/>
              <polyline points="0,830 80,830 250,805 380,774 480,761 545,768 650,820 700,855 820,988 870,1065 900,1145 912,1210 910,1265 890,1340 868,1395 820,1455 715,1545"/>
              <polyline points="0,1036 150,1048 240,1045 320,1017 400,1007 485,1004 595,1022 650,1045 703,1080 740,1143 748,1208 730,1270 702,1332 640,1395 590,1425 480,1477 360,1545"/>
              <polyline points="1150,960 1152,1022 1228,1133 1237,1210 1225,1347 1195,1397 1188,1458 1140,1520 1138,1545"/>
            </g>
            <polyline class="wall" points="0,450 25,482 325,685 333,705 367,878 367,990 377,990 377,870 342,685 325,668 40,485 0,432"/>
          </g>
          <polyline class="wall" points="929,322 797,605 797,640 833,850 838,860 960,1037"/>
          <polyline class="wall" points="940,324 806,605 807,640 845,850 960,1018"/>
        </g>
      </svg>
      <div class="navbar">
        <svg class="dotbtn" viewBox="0 0 8 8"><circle cx="4" cy="4" r="4" fill="#b4b4b4"/><path d="M2 2L6 6M6 2L2 6" stroke="#fff"/></svg>
        <button aria-label="Steering wheel"><svg viewBox="0 0 26 26"><path d="M11 1H21V11C21 24 1 24 1 11C1 5 5 1 11 1Z" fill="#ececee" stroke="#a2a5aa" stroke-width="1.4"/><circle cx="11" cy="11" r="5" fill="#f8f8f8" stroke="#a2a5aa" stroke-width="1.4"/><path d="M5 18L8 14M14 14L17 17" stroke="#a2a5aa"/><text x="12" y="24" class="twod">2D</text></svg></button>
        <svg class="mini"><use href="#down"/></svg>
        <hr>
        <button aria-label="Zoom"><svg viewBox="0 0 26 26"><path d="M5 6H16V17H5Z" fill="#b5d6a5" stroke="#8bb77a"/><circle cx="16" cy="16" r="4" fill="#f4f4f4" stroke="#9a9da3" stroke-width="1.6"/><path d="M19 19L23 23" stroke="#9a9da3" stroke-width="2"/></svg></button>
        <svg class="mini"><use href="#down"/></svg>
        <svg class="dotbtn" viewBox="0 0 8 8"><circle cx="4" cy="4" r="4" fill="#b4b4b4"/><path d="M2 4H6" stroke="#fff"/></svg>
      </div>
      <div class="scroll vert"><svg><use href="#chev"/></svg><i></i><svg class="flip"><use href="#chev"/></svg></div>
    </div>
    <div class="viewbar">
      <span class="ratio">1 : 100</span>
      <button aria-label="Detail"><svg viewBox="0 0 20 20"><rect x="1" y="1" width="18" height="15" fill="url(#grey)" stroke="#565b65" stroke-width="1.5"/></svg></button>
      <button aria-label="Style"><svg viewBox="0 0 20 20"><path d="M1 8L6 2H19V12L14 18H1ZM1 8H14V18M14 8L19 2" fill="#e9ebef" stroke="#50555f" stroke-width="1.5"/></svg></button>
      <button aria-label="Sun path"><svg viewBox="0 0 20 20"><path d="M8 0V16M0 8H16M2 2L14 14M14 2L2 14" stroke="#d99a1d" stroke-width="1.4"/><circle cx="8" cy="8" r="5" fill="#ffd95e" stroke="#d99a1d"/><use href="#redx" x="10" y="9" width="10" height="10"/></svg></button>
      <button aria-label="Shadows"><svg viewBox="0 0 20 20"><path d="M2 17H12" stroke="#777" stroke-width="3"/><circle cx="8" cy="8" r="6" fill="#cde5f7" stroke="#5089bd" stroke-width="1.6"/><use href="#redx" x="9" y="9" width="10" height="10"/></svg></button>
      <button aria-label="Crop"><svg viewBox="0 0 20 20"><path d="M0 14H4M6 18V6H18V16M3 6H20M9 17V9H15" fill="none" stroke="#2f6ea8" stroke-width="2.4"/><use href="#redx" x="9" y="8" width="10" height="10"/></svg></button>
      <button aria-label="Crop region"><svg viewBox="0 0 20 20"><path d="M0 14H4M6 18V6H17M3 6H16M9 17V9H13" fill="none" stroke="#2f6ea8" stroke-width="2.4"/><circle cx="15" cy="9" r="4" fill="#d7eafa" stroke="#4b87c0"/><path d="M14 13H16V18H14Z" fill="#555"/></svg></button>
      <button aria-label="Hide isolate"><svg viewBox="0 0 20 20"><path d="M1 5L5 12L8 8M10 14L18 4L14 2" fill="none" stroke="#4c515a" stroke-width="1.6"/><circle cx="7" cy="12" r="3" fill="#cfe5f4" stroke="#4c515a" stroke-width="1.3"/><circle cx="15" cy="10" r="3" fill="#cfe5f4" stroke="#4c515a" stroke-width="1.3"/></svg></button>
      <button aria-label="Reveal"><svg viewBox="0 0 20 20"><circle cx="10" cy="8" r="4" fill="#d7eafa" stroke="#3d82c6" stroke-width="1.5"/><path d="M8 12H12V17H8Z" fill="#6d7f96"/></svg></button>
      <button aria-label="Temporary properties"><svg viewBox="0 0 20 20"><path d="M1 4H18V16H1Z" fill="#f4f4f4" stroke="#33373f" stroke-width="1.6"/><path d="M1 4H18" stroke="#33373f" stroke-width="3" stroke-dasharray="2 1"/><circle cx="14" cy="13" r="4" fill="#ddd" stroke="#33373f" stroke-width="1.5"/><circle cx="14" cy="13" r="1" fill="#33373f"/></svg></button>
      <button aria-label="Analytical"><svg viewBox="0 0 20 20"><path d="M1 17V6L5 2H17V12M1 6H13V17M1 11H13M5 6V17M9 2V17" fill="none" stroke="#50555f" stroke-width="1.5"/><path d="M3 18V12M7 18V12" stroke="#c8372f" stroke-width="1.6"/><circle cx="16" cy="8" r="4" fill="#ffc34d" stroke="#d38a10"/></svg></button>
      <button aria-label="Constraints"><svg viewBox="0 0 20 20"><path d="M1 1V18M19 1V9M1 5H19M4 3L1 5L4 7M16 3L19 5L16 7M3 15H10" fill="none" stroke="#50555f" stroke-width="1.4"/><path d="M11 12H19V18H11Z" fill="#555b66"/><path d="M13 12V9H17V12" fill="none" stroke="#555b66" stroke-width="1.4"/></svg></button>
      <button class="back" aria-label="Scroll left"><svg class="left"><use href="#chev"/></svg></button>
      <i class="hthumb"></i>
      <svg class="right"><use href="#chev"/></svg>
      <svg class="grip" viewBox="0 0 12 12"><path d="M9 0h3v3h-3zM5 4h3v3h-3zM9 4h3v3h-3zM0 9h3v3h-3zM5 9h3v3h-3zM9 9h3v3h-3z" fill="#bbb"/></svg>
    </div>
  </section>
</main>

<footer class="status">
  <p>Click to select, TAB for alternates, CTRL adds, SHIFT unselects.</p>
  <button aria-label="Worksets"><svg viewBox="0 0 20 20"><path d="M6 3L10 1H15V8H6Z" fill="#eaf6e4" stroke="#317a35" stroke-width="1.5"/><path d="M1 9L4 7H10V18H1ZM1 10H10M5 10V18" fill="#cfe6f8" stroke="#1f6cae" stroke-width="1.5"/><path d="M13 7V10L16 12L19 10V7M16 12V19" fill="none" stroke="#3a4660" stroke-width="2"/></svg></button>
  <div class="combo wide"><select aria-label="Active workset"><option></option></select><svg><use href="#chev"/></svg></div>
  <button class="req dim" aria-label="Editing requests"><svg viewBox="0 0 20 20"><path d="M6 1H18V8H13L9 11V8H6Z" fill="#eee" stroke="#666" stroke-width="1.4"/><path d="M3 13L6 9L8 12V15H12V20H0V15H3Z" fill="#666"/></svg></button><span class="num">:0</span>
  <button class="opt" aria-label="Design options"><svg viewBox="0 0 20 20"><rect x="1" y="1" width="18" height="18" rx="2" fill="#f6f6f8" stroke="#444a54" stroke-width="1.6"/><path d="M1 4H19" stroke="#444a54" stroke-width="3"/><path d="M4 8H10M7 12H15M7 16H15" stroke="#333" stroke-width="1.8"/></svg></button>
  <button class="opt dim" aria-label="Add to set"><svg viewBox="0 0 20 20"><path d="M2 1H19V19H2Z" fill="#666"/><path d="M0 12H8V9L14 14L8 19V16H0Z" fill="#eee" stroke="#777"/></svg></button>
  <div class="combo wide"><select aria-label="Design option"><option>Main Model</option></select><svg><use href="#chev"/></svg></div>
  <div class="filters">
    <button aria-label="Select links"><svg viewBox="0 0 20 20"><circle cx="5" cy="5" r="4" fill="#ffd54a" stroke="#a87a0b" stroke-width="1.5"/><circle cx="14" cy="5" r="4" fill="#ffd54a" stroke="#a87a0b" stroke-width="1.5"/><use href="#arrow" x="8" y="4" width="11" height="16"/></svg></button>
    <button aria-label="Select underlay"><svg viewBox="0 0 20 20"><path d="M8 3L1 16H15M8 3L5 12H17" fill="#d8ecf8" stroke="#2c7fb0" stroke-width="1.5"/><use href="#redx" x="10" y="0" width="10" height="10"/><use href="#arrow" x="9" y="5" width="11" height="15"/></svg></button>
    <button aria-label="Select pinned"><svg viewBox="0 0 20 20"><path d="M2 1H12V4L10 8L13 12H1L4 8L2 4Z" fill="#e99a42" stroke="#a4521a" stroke-width="1.5"/><path d="M7 12V19" stroke="#555" stroke-width="1.6"/><use href="#arrow" x="9" y="5" width="11" height="15"/></svg></button>
    <button aria-label="Select by face"><svg viewBox="0 0 20 20"><path d="M2 4L9 1V15L2 18Z" fill="#bfe0f4" stroke="#2c7fb0" stroke-width="1.5"/><use href="#redx" x="10" y="0" width="10" height="10"/><use href="#arrow" x="8" y="5" width="11" height="15"/></svg></button>
    <button aria-label="Drag on select"><svg viewBox="0 0 20 20"><path d="M6 0V13M0 6H13M4 2L6 0L8 2M2 4L0 6L2 8M4 11L6 13L8 11M11 4L13 6L11 8" fill="none" stroke="#222" stroke-width="1.3"/><use href="#arrow" x="9" y="5" width="11" height="15"/></svg></button>
    <button aria-label="Background"><svg viewBox="0 0 20 20"><circle cx="10" cy="10" r="6" fill="none" stroke="#999" stroke-width="4" stroke-dasharray="4 1"/></svg></button>
    <button aria-label="Filter"><svg viewBox="0 0 20 20"><path d="M1 2H19L12 11V18L8 19V11Z" fill="#c6cbd3" stroke="#4c5568" stroke-width="1.6"/></svg></button>
    <span>:0</span>
  </div>
</footer>
</body>
</html>
```
FILE: styles.css
```css
* {
    box-sizing: border-box;
}
body {
    margin: 0;
    height: 100vh;
    display: flex;
    flex-direction: column;
    overflow: hidden;
    background: #eee;
    color: #444;
    font: 14px/20px "Open Sans", "Noto Sans", sans-serif;
}
button, input, select {
    font: inherit;
    color: inherit;
    margin: 0;
    padding: 0;
    border: 0;
    background: none;
}
h1, h2, h3, p {
    margin: 0;
    font-size: 14px;
    font-weight: normal;
}
h1, h3 {
    font-family: "Noto Sans", "Open Sans", sans-serif;
}
a {
    color: inherit;
    text-decoration: none;
}
svg {
    display: block;
    flex: none;
}
.defs {
    position: absolute;
    width: 0;
    height: 0;
}
.dim {
    opacity: .5;
}

/* title bar */
.titlebar {
    display: flex;
    align-items: flex-start;
    height: 35px;
    background: #cbcbcb;
}
.quick, .account, .window {
    display: flex;
    align-items: center;
    height: 28px;
}
.quick {
    width: 660px;
}
.ico svg {
    width: 20px;
    height: 20px;
}
.quick .ico:first-child {
    padding-left: 2px;
}
.quick .ico:first-child svg {
    height: 26px;
}
.ico {
    padding: 0 4px;
}
.ico.gap {
    padding-left: 8px;
}
.ico.open {
    padding-left: 10px;
}
.ico.text {
    width: 28px;
    color: #3c4049;
    font: bold 25px/26px "Open Sans", sans-serif;
}
.dd {
    padding: 0 4px 0 5px;
}
.dd svg {
    width: 8px;
    height: 5px;
}
.dd svg[viewBox] {
    width: 10px;
    height: 9px;
}
.account .dd {
    padding: 0 5px 0 7px;
}
.vr {
    width: 1px;
    height: 26px;
    margin: 0 5px;
    background: #b5b5b5;
}
.titlebar h1 {
    flex: 1;
    padding: 1px 0 0 44px;
    white-space: nowrap;
}
.user {
    display: flex;
    align-items: center;
    gap: 6px;
    width: 132px;
    padding-left: 6px;
}
.user svg, .trial svg {
    width: 20px;
    height: 20px;
}
.trial {
    display: flex;
    align-items: center;
    justify-content: center;
    gap: 4px;
    width: 55px;
    height: 28px;
    background: #0a93d8;
    border: 1px solid #0a62ad;
    color: #fff;
}
.window {
    gap: 16px;
    padding: 0 8px 0 22px;
}
.window svg {
    width: 16px;
    height: 16px;
}

/* ribbon tabs */
.tabs {
    display: flex;
    height: 25px;
    background: #cbcbcb;
    line-height: 25px;
}
.tabs a {
    padding: 0 12px;
}
.tabs .file {
    width: 53px;
    margin-right: 2px;
    background: #2a7ab2;
    color: #fff;
}
.tabs .active {
    margin-left: 3px;
    padding: 0 14px;
    background: #eee;
    color: #111;
}
.tabs .active ~ a {
    padding: 0 13px;
}
.minimize {
    display: flex;
    align-items: center;
    gap: 6px;
    margin-left: 26px;
}
.minimize svg {
    width: 18px;
    height: 12px;
}
.minimize .tri {
    width: 7px;
    height: 4px;
}

/* ribbon */
.ribbon {
    display: flex;
    height: 121px;
    border-bottom: 1px solid #c8c8c8;
}
.panel {
    display: flex;
    flex-direction: column;
    border-right: 1px solid #d8d8d8;
}
.panel:last-child {
    border: 0;
}
.panel h2 {
    position: relative;
    margin-top: auto;
    padding-bottom: 1px;
    text-align: center;
}
.tools {
    display: grid;
    height: 94px;
    padding-top: 4px;
}
.tools button {
    display: flex;
    flex-direction: column;
    align-items: center;
    position: relative;
    padding-top: 2px;
    white-space: nowrap;
}
.tools button > svg {
    width: 38px;
    height: 40px;
    margin-bottom: 6px;
}
.tools button:disabled {
    color: #b4b4b4;
}
.tools button > .tri {
    position: absolute;
    right: 6px;
    top: 68px;
    width: 6px;
    height: 4px;
}
.tools .modify {
    width: 54px;
    margin-left: 5px;
    border: 1px solid #0a63bd;
    background: linear-gradient(#c3daf3, #abd0f1);
}
.tools .modify > svg {
    width: 18px;
    height: 26px;
    margin: 7px 0 12px;
}
.select {
    width: 69px;
}
.select h2 {
    display: flex;
    align-items: center;
    gap: 8px;
    padding-left: 4px;
}
.select h2 svg {
    width: 10px;
    height: 6px;
}
.mass .tools {
    grid-template-columns: 138px 67px 40px 58px;
    padding-left: 8px;
}
.face .tools {
    grid-template-columns: 56px 50px 45px 53px;
}
.site .tools {
    grid-template-columns: 90px 88px 84px 66px;
}
.site h2 {
    padding-right: 16px;
}
.edit .tools {
    grid-template-columns: 56px 60px 80px 62px 56px 87px;
    padding-left: 3px;
}
.edit .apart {
    margin-left: 7px;
    border-left: 1px solid #ccc;
}
.launch {
    position: absolute;
    right: 6px;
    top: 6px;
    width: 8px;
    height: 8px;
}
.formit {
    font: bold 10px "Liberation Sans", sans-serif;
    fill: #aaa;
}
.formit .big {
    font-size: 15px;
}
.fifty {
    font-size: 20px;
    text-anchor: middle;
    fill: #50555e;
}
.options {
    height: 34px;
}

main {
    display: flex;
    flex: 1;
    min-height: 0;
}

/* palettes */
aside {
    display: flex;
    flex-direction: column;
    width: 416px;
    border-right: 2px solid #cbcbcb;
    background: #eee;
    color: #000;
}
.bar {
    display: flex;
    align-items: center;
    justify-content: space-between;
    height: 26px;
    padding-right: 6px;
    border-top: 2px solid #cbcbcb;
    color: #444;
}
.bar svg {
    width: 14px;
    height: 14px;
}
.type {
    display: flex;
    align-items: center;
    gap: 5px;
    width: 411px;
    height: 88px;
    padding-left: 2px;
    border: solid #d0d0d0;
    border-width: 1px 1px 0 0;
    color: #444;
}
.thumb {
    display: grid;
    place-items: center;
    width: 82px;
    height: 82px;
    border: 1px solid #ccc;
}
.thumb svg {
    width: 40px;
    height: 40px;
}
.type .tri {
    width: 10px;
    height: 5px;
    margin-left: auto;
    margin-right: 3px;
}
.instance {
    display: flex;
    height: 29px;
}
.combo {
    position: relative;
    width: 315px;
    height: 28px;
}
.combo select {
    width: 100%;
    height: 100%;
    padding-left: 2px;
    border: 1px solid #adadad;
    background: #e1e1e1;
    appearance: none;
}
.combo svg {
    position: absolute;
    right: 5px;
    top: 11px;
    width: 10px;
    height: 7px;
    transform: rotate(180deg);
}
.edit-type {
    display: flex;
    align-items: center;
    gap: 5px;
    padding-left: 5px;
}
.edit-type svg {
    width: 18px;
    height: 18px;
}
.grid {
    display: flex;
    height: 214px;
    overflow: hidden;
}
table {
    width: 390px;
    border-collapse: collapse;
    table-layout: fixed;
    background: #fff;
}
.name {
    width: 187px;
}
.value {
    width: 188px;
}
tr {
    height: 24px;
}
th, td {
    height: 24px;
    padding: 0;
    border: 1px dotted #666;
    border-top: 0;
    line-height: 20px;
    font-weight: normal;
    text-align: left;
    white-space: nowrap;
}
th {
    padding-left: 8px;
    border-left: 0;
}
td {
    padding-left: 2px;
}
.group {
    padding: 0;
    border: 0;
    background: #dbdbdb;
    color: #333;
}
.group svg {
    float: right;
    width: 7px;
    height: 10px;
    margin: 4px 6px 0 0;
}
.off {
    color: #777;
}
td.edit {
    padding: 0;
}
td input {
    display: block;
    width: 100%;
    height: 23px;
    padding-left: 6px;
    border: 1px solid #000;
}
td button {
    display: block;
    width: 100%;
    height: 22px;
    border: 1px solid #adadad;
    border-width: 1px 2px 2px 1px;
    background: #e1e1e1;
    line-height: 18px;
}
.scroll {
    display: flex;
    flex-direction: column;
    align-items: center;
    width: 20px;
    padding: 8px 0;
    background: #f0f0f0;
}
.scroll svg {
    width: 11px;
    height: 7px;
}
.scroll i {
    width: 19px;
    height: 34px;
    margin-top: 6px;
    background: #cdcdcd;
}
.scroll .flip {
    margin-top: auto;
}
.flip {
    transform: rotate(180deg);
}
.props footer {
    display: flex;
    justify-content: space-between;
    height: 33px;
    padding: 2px 5px 0 0;
}
.props footer a {
    color: #0a66cc;
    text-decoration: underline;
}
.props footer button {
    width: 87px;
    height: 26px;
    border: 1px solid #bfbfbf;
    background: #ccc;
    color: #838383;
}

/* project browser */
.browser {
    display: flex;
    flex-direction: column;
    flex: 1;
    min-height: 0;
}
.treebox {
    display: flex;
    justify-content: space-between;
    flex: 1;
    min-height: 0;
    margin-right: 3px;
    margin-bottom: 3px;
    background: #fff;
    overflow: hidden;
}
.scroll.tall i {
    height: 224px;
}
.tree, .tree ul {
    margin: 0;
    padding: 0;
    list-style: none;
}
.tree {
    padding-top: 1px;
}
.tree ul {
    margin-left: -4px;
}
.tree li {
    position: relative;
    padding-left: 30px;
    line-height: 22px;
    white-space: nowrap;
}
.tree > li {
    padding-left: 24px;
}
.tree > li > ul {
    margin-left: 2px;
}
.tree li::before {
    content: "";
    position: absolute;
    left: 8px;
    top: 0;
    bottom: 0;
    border-left: 1px dotted #999;
}
.tree ul li:last-child::before {
    bottom: auto;
    height: 11px;
}
.tree li::after {
    content: "";
    position: absolute;
    left: 9px;
    top: 11px;
    width: 18px;
    border-top: 1px dotted #999;
}
.tree > li::after {
    width: 14px;
}
.tree b {
    display: inline-block;
    margin-left: -3px;
    padding: 0 4px 0 3px;
    background: #e1e1e1;
    color: #000;
}
.minus {
    position: absolute;
    z-index: 1;
    left: 2px;
    top: 5px;
    width: 13px;
    height: 13px;
    border: 1px solid #919191;
    background: linear-gradient(#3f5fa8, #3f5fa8) center / 9px 1px no-repeat, linear-gradient(#fff, #e4e4e4);
}
.plus {
    background: linear-gradient(#3f5fa8, #3f5fa8) center / 9px 1px no-repeat, linear-gradient(#3f5fa8, #3f5fa8) center / 1px 9px no-repeat, linear-gradient(#fff, #e4e4e4);
}
.views {
    display: inline-block;
    width: 19px;
    height: 19px;
    margin-right: 7px;
    vertical-align: middle;
}

/* view area */
.work {
    display: flex;
    flex-direction: column;
    flex: 1;
    min-width: 0;
    border-bottom: 3px solid #fff;
}
.views-tabs {
    display: flex;
    height: 26px;
    background: #cbcbcb;
}
.views-tabs a {
    display: flex;
    align-items: center;
    gap: 9px;
    width: 160px;
    padding-left: 6px;
}
.views-tabs svg {
    width: 20px;
    height: 19px;
}
.views-tabs .active {
    background: #fff;
    color: #000;
    font-weight: bold;
}
.views-tabs .close {
    width: 12px;
    height: 12px;
    margin-left: auto;
    margin-right: 7px;
}
.faded {
    opacity: .6;
}
.views-tabs button {
    margin-left: auto;
    padding: 2px 5px 0;
}
.views-tabs button svg {
    width: 11px;
    height: 9px;
}
.canvas {
    position: relative;
    display: flex;
    flex: 1;
    min-height: 0;
    background: #fff;
}
.drawing {
    flex: 1;
    min-width: 0;
    height: 100%;
    overflow: hidden;
}
.drawing polyline {
    fill: none;
    stroke-width: 1px;
    vector-effect: non-scaling-stroke;
    shape-rendering: crispEdges;
}
.minor polyline {
    stroke: #ff0;
}
.band polyline {
    stroke-width: 5px;
}
.major polyline {
    stroke: #00f;
}
.drawing .wall {
    stroke: #000;
}
.dot {
    shape-rendering: crispEdges;
}
.vert {
    width: 21px;
}
.vert i {
    height: 21px;
    margin-top: 341px;
}
.navbar {
    position: absolute;
    right: 22px;
    top: 2px;
    display: flex;
    flex-direction: column;
    align-items: center;
    width: 36px;
    height: 118px;
    padding: 3px;
    border: 2px solid #b9b9b9;
    border-radius: 6px;
    background: #f4f4f4;
}
.navbar .dotbtn {
    align-self: flex-end;
    width: 8px;
    height: 8px;
}
.navbar button svg {
    width: 26px;
    height: 26px;
    margin-top: 9px;
}
.navbar hr ~ button svg {
    margin-top: 4px;
}
.navbar hr ~ .dotbtn {
    margin-top: auto;
}
.navbar .mini {
    width: 5px;
    height: 3px;
    margin-top: 3px;
    opacity: .6;
}
.navbar hr {
    width: 26px;
    margin: 4px 0 0;
    border: 0;
    border-top: 1px solid #c4c4c4;
}
.twod {
    font: bold 10px "Open Sans", sans-serif;
    fill: #6f9fd0;
}
.viewbar {
    display: flex;
    align-items: center;
    height: 21px;
    border-bottom: 1px solid #ccc;
    background: #f0f0f0;
    color: #000;
}
.ratio {
    width: 90px;
    padding-left: 29px;
    font-size: 13px;
}
.viewbar button {
    padding: 0 2px 0 3px;
}
.viewbar button svg {
    width: 20px;
    height: 20px;
}
.viewbar svg.left, .viewbar svg.right {
    width: 12px;
    height: 8px;
    transform: rotate(-90deg);
}
.viewbar svg.right {
    margin-left: auto;
    margin-right: 12px;
    transform: rotate(90deg);
}
.viewbar .back {
    padding: 0 5px;
}
.hthumb {
    width: 21px;
    height: 19px;
    margin-left: 525px;
    background: #cdcdcd;
}
.grip {
    width: 12px;
    height: 12px;
    margin-right: 4px;
}

/* status bar */
.status {
    display: flex;
    align-items: center;
    height: 34px;
    border-bottom: 1px solid #eee;
    background: #cbcbcb;
    color: #111;
}
.status p {
    width: 685px;
}
.status button svg {
    width: 20px;
    height: 20px;
}
.status .wide {
    width: 255px;
    height: 23px;
    margin: 0 8px;
    color: #888;
}
.status .wide select {
    border: 0;
    background: #fff;
}
.status .wide svg {
    top: 8px;
    opacity: .6;
}
.num {
    width: 41px;
    padding-left: 4px;
}
.opt {
    margin-right: 9px;
}
.opt.dim {
    margin-right: 0;
}
.filters {
    display: flex;
    align-items: center;
    gap: 10px;
    margin-left: auto;
    margin-right: 76px;
}
.filters span {
    margin-left: -10px;
}
```
